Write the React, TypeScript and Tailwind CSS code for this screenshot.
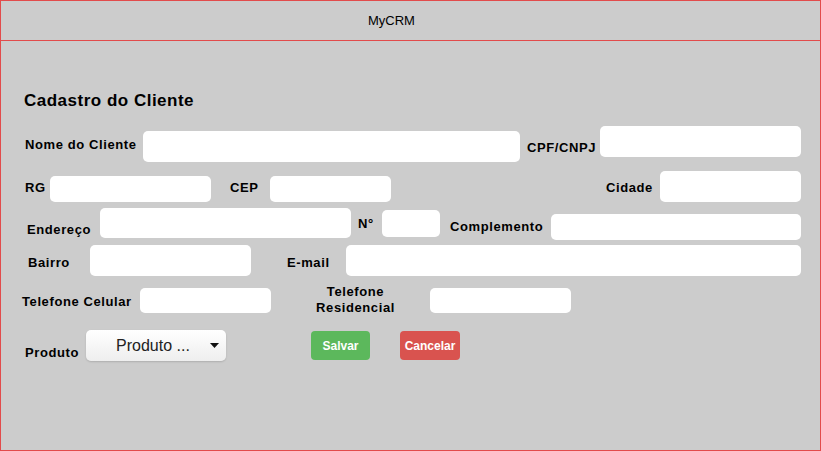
const font = { fontFamily: '"Liberation Sans", Arial, sans-serif' };

function Label({ text, className }: { text: string; className: string }) {
  return (
    <span className={`shrink-0 whitespace-nowrap text-[13px] leading-[14px] font-bold tracking-[0.6px] text-black ${className}`}>
      {text}
    </span>
  );
}

function Field({ className }: { className: string }) {
  return <input type="text" className={`shrink-0 bg-white rounded-[5px] outline-none border-0 ${className}`} />;
}

export default function App() {
  return (
    <div style={font} className="w-[821px] h-[451px] bg-[#cccccc] border border-[#e24b4b] overflow-hidden">
      <header className="h-[40px] border-b border-[#e24b4b] flex items-center">
        <span className="ml-[367px] text-[13px] text-black">MyCRM</span>
      </header>

      <h1 className="mt-[50px] ml-[23px] text-[17px] leading-[20px] font-bold tracking-[0.5px] text-black">
        Cadastro do Cliente
      </h1>

      {/* linha 1 */}
      <div className="mt-[15px] flex items-start">
        <Label text="Nome do Cliente" className="ml-[24px] w-[118px] mt-[12px]" />
        <Field className="w-[377px] h-[31px] mt-[5px]" />
        <Label text="CPF/CNPJ" className="ml-[7px] w-[73px] mt-[15px]" />
        <Field className="w-[201px] h-[31px]" />
      </div>

      {/* linha 2 */}
      <div className="mt-[9px] flex items-start">
        <Label text="RG" className="ml-[24px] w-[25px] mt-[10px]" />
        <Field className="w-[161px] h-[26px] mt-[5px]" />
        <Label text="CEP" className="ml-[19px] w-[40px] mt-[10px]" />
        <Field className="w-[121px] h-[26px] mt-[5px]" />
        <Label text="Cidade" className="ml-[215px] w-[54px] mt-[10px]" />
        <Field className="w-[141px] h-[31px]" />
      </div>

      {/* linha 3 */}
      <div className="mt-[6px] flex items-start">
        <Label text="Endereço" className="ml-[26px] w-[73px] mt-[15px]" />
        <Field className="w-[251px] h-[30px]" />
        <Label text="N°" className="ml-[7px] w-[24px] mt-[9px]" />
        <Field className="w-[58px] h-[27px] mt-[2px]" />
        <Label text="Complemento" className="ml-[10px] w-[101px] mt-[12px]" />
        <Field className="w-[250px] h-[26px] mt-[6px]" />
      </div>

      {/* linha 4 */}
      <div className="mt-[5px] flex items-start">
        <Label text="Bairro" className="ml-[27px] w-[62px] mt-[11px]" />
        <Field className="w-[161px] h-[31px]" />
        <Label text="E-mail" className="ml-[36px] w-[59px] mt-[11px]" />
        <Field className="w-[455px] h-[31px]" />
      </div>

      {/* linha 5 */}
      <div className="mt-[7px] flex items-start">
        <Label text="Telefone Celular" className="ml-[21px] w-[118px] mt-[12px]" />
        <Field className="w-[131px] h-[25px] mt-[5px]" />
        <div className="ml-[10px] mt-[1px] w-[149px] shrink-0 text-center text-[13px] leading-[16px] font-bold tracking-[0.6px] text-black">
          Telefone
          <br />
          Residencial
        </div>
        <Field className="w-[141px] h-[25px] mt-[5px]" />
      </div>

      {/* linha 6 */}
      <div className="mt-[14px] flex items-start">
        <Label text="Produto" className="ml-[24px] w-[61px] mt-[16px]" />
        <button className="shrink-0 w-[140px] h-[31px] rounded-[5px] bg-gradient-to-b from-white to-[#eeeeee] shadow-[0_1px_2px_rgba(0,0,0,0.15)] flex items-center">
          <span className="ml-[30px] text-[16px] leading-[20px] text-[#222]">Produto ...</span>
          <svg width="9" height="5" viewBox="0 0 9 5" className="ml-[20px]">
            <path d="M0 0h9L4.5 5z" fill="#111" />
          </svg>
        </button>
        <button className="shrink-0 ml-[85px] mt-[1px] w-[59px] h-[29px] rounded-[4px] bg-[#5cb85c] text-white text-[12px] font-bold">
          Salvar
        </button>
        <button className="shrink-0 ml-[30px] mt-[1px] w-[60px] h-[29px] rounded-[4px] bg-[#d9534f] text-white text-[12px] font-bold">
          Cancelar
        </button>
      </div>
    </div>
  );
}
